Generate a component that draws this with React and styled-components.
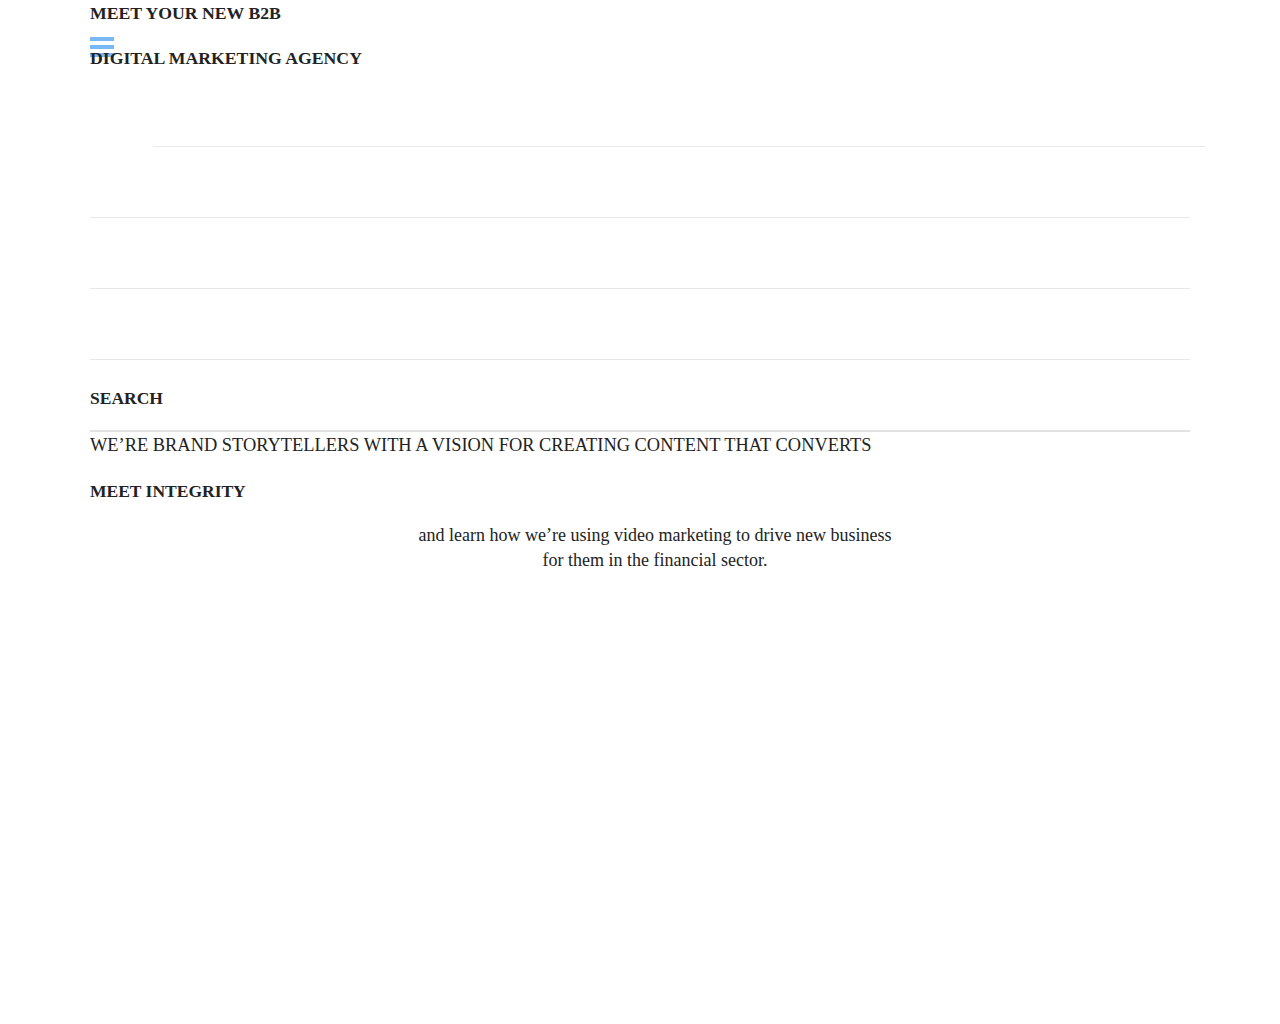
import React from "react";
import styled, { createGlobalStyle } from "styled-components";

const GlobalStyle = createGlobalStyle`
  html, body {
    margin: 0;
    padding: 0;
    background: #fff;
  }
  body {
    font-family: "Liberation Serif", "Times New Roman", serif;
    color: #222;
  }
`;

const App = () => {
  const menu = ["first", "second", "third", "fourth"];

  return (
    <>
      <GlobalStyle />
      <Page>
        <Header>
          <Burger aria-label="menu">
            <span />
            <span />
            <span />
          </Burger>
          <Titulo>
            <TituloLinea>MEET YOUR NEW B2B</TituloLinea>
            <TituloLinea segunda>DIGITAL MARKETING AGENCY</TituloLinea>
          </Titulo>
        </Header>

        <Menu>
          {menu.map((item, i) => (
            <MenuItem key={item} primero={i === 0} />
          ))}
        </Menu>

        <Encabezado arriba={27}>SEARCH</Encabezado>
        <Divisor />

        <Lema>WE’RE BRAND STORYTELLERS WITH A VISION FOR CREATING CONTENT THAT CONVERTS</Lema>
        <Encabezado arriba={24}>MEET INTEGRITY</Encabezado>

        <Parrafo>
          and learn how we’re using video marketing to drive new business for them in the
          financial sector.
        </Parrafo>
      </Page>
    </>
  );
};

const Page = styled.div`
  padding: 0 60px 0 90px;
`;

const Header = styled.header`
  position: relative;
  padding-top: 2px;
`;

const Burger = styled.div`
  position: absolute;
  top: 37px;
  left: 0;
  width: 24px;
  display: flex;
  flex-direction: column;
  gap: 4px;

  span {
    display: block;
    height: 4px;
    background: #7ab8f5;
  }
`;

const Titulo = styled.h1`
  position: relative;
  margin: 0;
  font-size: 17.7px;
  font-weight: bold;
  line-height: 22px;
  text-transform: uppercase;
`;

const TituloLinea = styled.span`
  display: block;
  margin-top: ${(props) => (props.segunda ? "23px" : "0")};
`;

const Menu = styled.nav`
  margin-right: 30px;
`;

const MenuItem = styled.div`
  height: ${(props) => (props.primero ? "77px" : "70px")};
  border-bottom: 1px solid #e8e8e8;
  margin-left: ${(props) => (props.primero ? "63px" : "0")};
  margin-right: ${(props) => (props.primero ? "-15px" : "0")};
`;

const Encabezado = styled.h3`
  margin: ${(props) => (props.arriba || 26) + "px"} 0 0;
  font-size: 17.5px;
  font-weight: bold;
  line-height: 22px;
`;

const Divisor = styled.hr`
  margin: 21px 30px 0 0;
  border: 0;
  height: 2px;
  background: #e2e2e2;
`;

const Lema = styled.p`
  margin: 2px 0 0;
  font-size: 18.4px;
  line-height: 22px;
`;

const Parrafo = styled.p`
  margin: 21px auto 0;
  max-width: 490px;
  font-size: 18px;
  line-height: 25px;
  text-align: center;
`;

export default App;
